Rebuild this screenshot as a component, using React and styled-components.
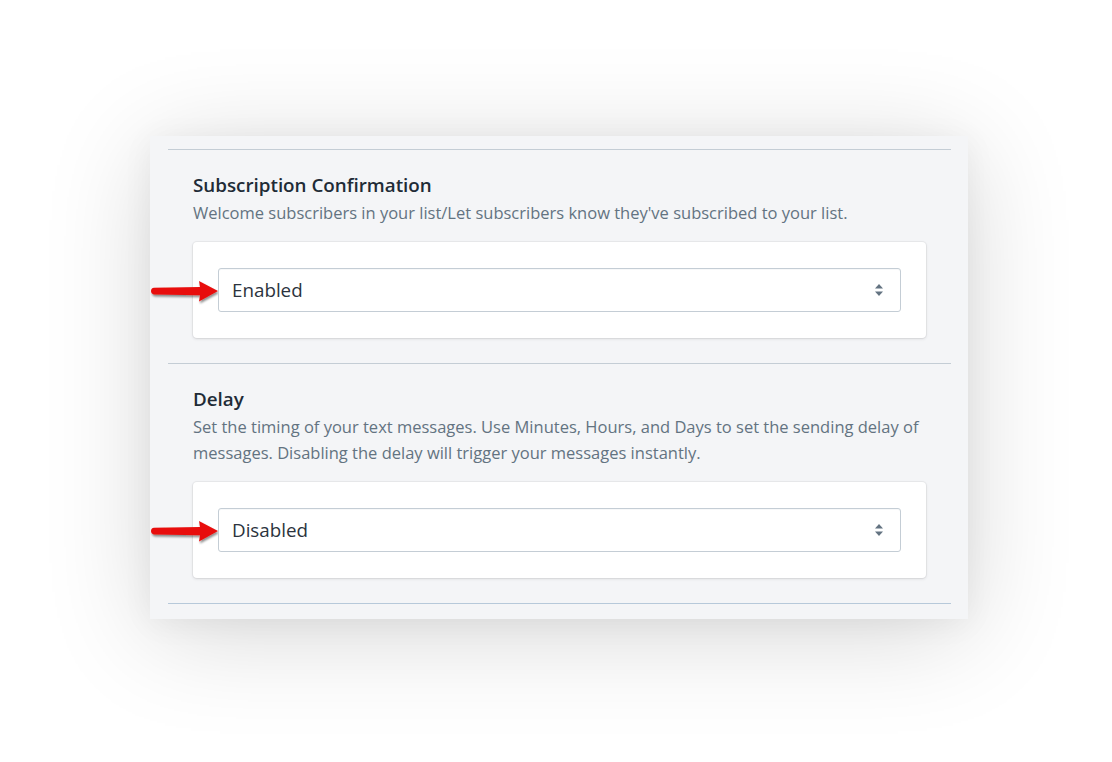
import React from 'react'
import styled, { createGlobalStyle } from 'styled-components'

const GlobalStyle = createGlobalStyle`
  html, body {
    margin: 0;
    background: #ffffff;
    font-family: "Open Sans", "Noto Sans", sans-serif;
  }
  #root {
    min-height: 100vh;
    box-sizing: border-box;
    padding: 136px 0 0 150px;
  }
`

const Panel = styled.div`
  width: 818px;
  box-sizing: border-box;
  background: #f4f5f7;
  padding: 13px 17px 15px 18px;
  box-shadow: 0 14px 100px rgba(0, 0, 0, 0.16), 0 4px 30px rgba(0, 0, 0, 0.05);
`

const Divider = styled.div`
  height: 1px;
  background: ${props => (props.blue ? '#b7c9da' : '#c4cdd5')};
`

const Section = styled.div`
  padding: 23px 25px 25px 25px;
`

const Title = styled.div`
  font-size: 18.8px;
  line-height: 24px;
  font-weight: 600;
  color: #212b36;
`

const Desc = styled.div`
  margin-top: 3px;
  font-size: 16.5px;
  line-height: 26px;
  color: #637381;
`

const Card = styled.div`
  position: relative;
  margin-top: 16px;
  background: #ffffff;
  border-radius: 4px;
  padding: 26px 25px;
  box-shadow: 0 0 0 1px rgba(63, 63, 68, 0.05), 0 1px 3px 0 rgba(63, 63, 68, 0.15);
`

const SelectWrap = styled.div`
  position: relative;
`

const Select = styled.select`
  display: block;
  width: 100%;
  height: 44px;
  box-sizing: border-box;
  appearance: none;
  border: 1px solid #c4cdd5;
  border-radius: 3px;
  background: #ffffff;
  padding: 0 40px 0 13px;
  font-family: "Open Sans", "Noto Sans", sans-serif;
  font-size: 18.8px;
  color: #2b333d;
  box-shadow: inset 0 1px 0 0 rgba(99, 115, 129, 0.05);
  outline: none;
`

const Caret = styled.svg`
  position: absolute;
  right: 17px;
  top: 15px;
  pointer-events: none;
`

const Arrow = styled.svg`
  position: absolute;
  left: -43px;
  top: ${props => props.top}px;
  overflow: visible;
`

function Pointer({ top }) {
  return (
    <Arrow width="70" height="24" viewBox="0 0 70 24" top={top}>
      <defs>
        <filter id="drop" x="-20%" y="-50%" width="140%" height="200%">
          <feDropShadow dx="1" dy="2" stdDeviation="1.3" floodColor="#000" floodOpacity="0.45" />
        </filter>
      </defs>
      <path
        d="M4 8.8 L50 8 L49 2 L68 12 L49 22.5 L50 16.2 L4 15.4 C0 15.4 0 8.8 4 8.8 Z"
        fill="#e8100c"
        filter="url(#drop)"
      />
    </Arrow>
  )
}

function Field({ title, desc, value }) {
  return (
    <Section>
      <Title>{title}</Title>
      <Desc>{desc}</Desc>
      <Card>
        <Pointer top={37} />
        <SelectWrap>
          <Select defaultValue={value}>
            <option>{value}</option>
          </Select>
          <Caret width="10" height="14" viewBox="0 0 10 14">
            <path d="M5 1 L9 5.5 L1 5.5 Z" fill="#637381" />
            <path d="M5 13 L9 8.5 L1 8.5 Z" fill="#637381" />
          </Caret>
        </SelectWrap>
      </Card>
    </Section>
  )
}

export default function App() {
  return (
    <>
      <GlobalStyle />
      <Panel>
        <Divider />
        <Field
          title="Subscription Confirmation"
          desc="Welcome subscribers in your list/Let subscribers know they've subscribed to your list."
          value="Enabled"
        />
        <Divider />
        <Field
          title="Delay"
          desc="Set the timing of your text messages. Use Minutes, Hours, and Days to set the sending delay of messages. Disabling the delay will trigger your messages instantly."
          value="Disabled"
        />
        <Divider blue />
      </Panel>
    </>
  )
}
